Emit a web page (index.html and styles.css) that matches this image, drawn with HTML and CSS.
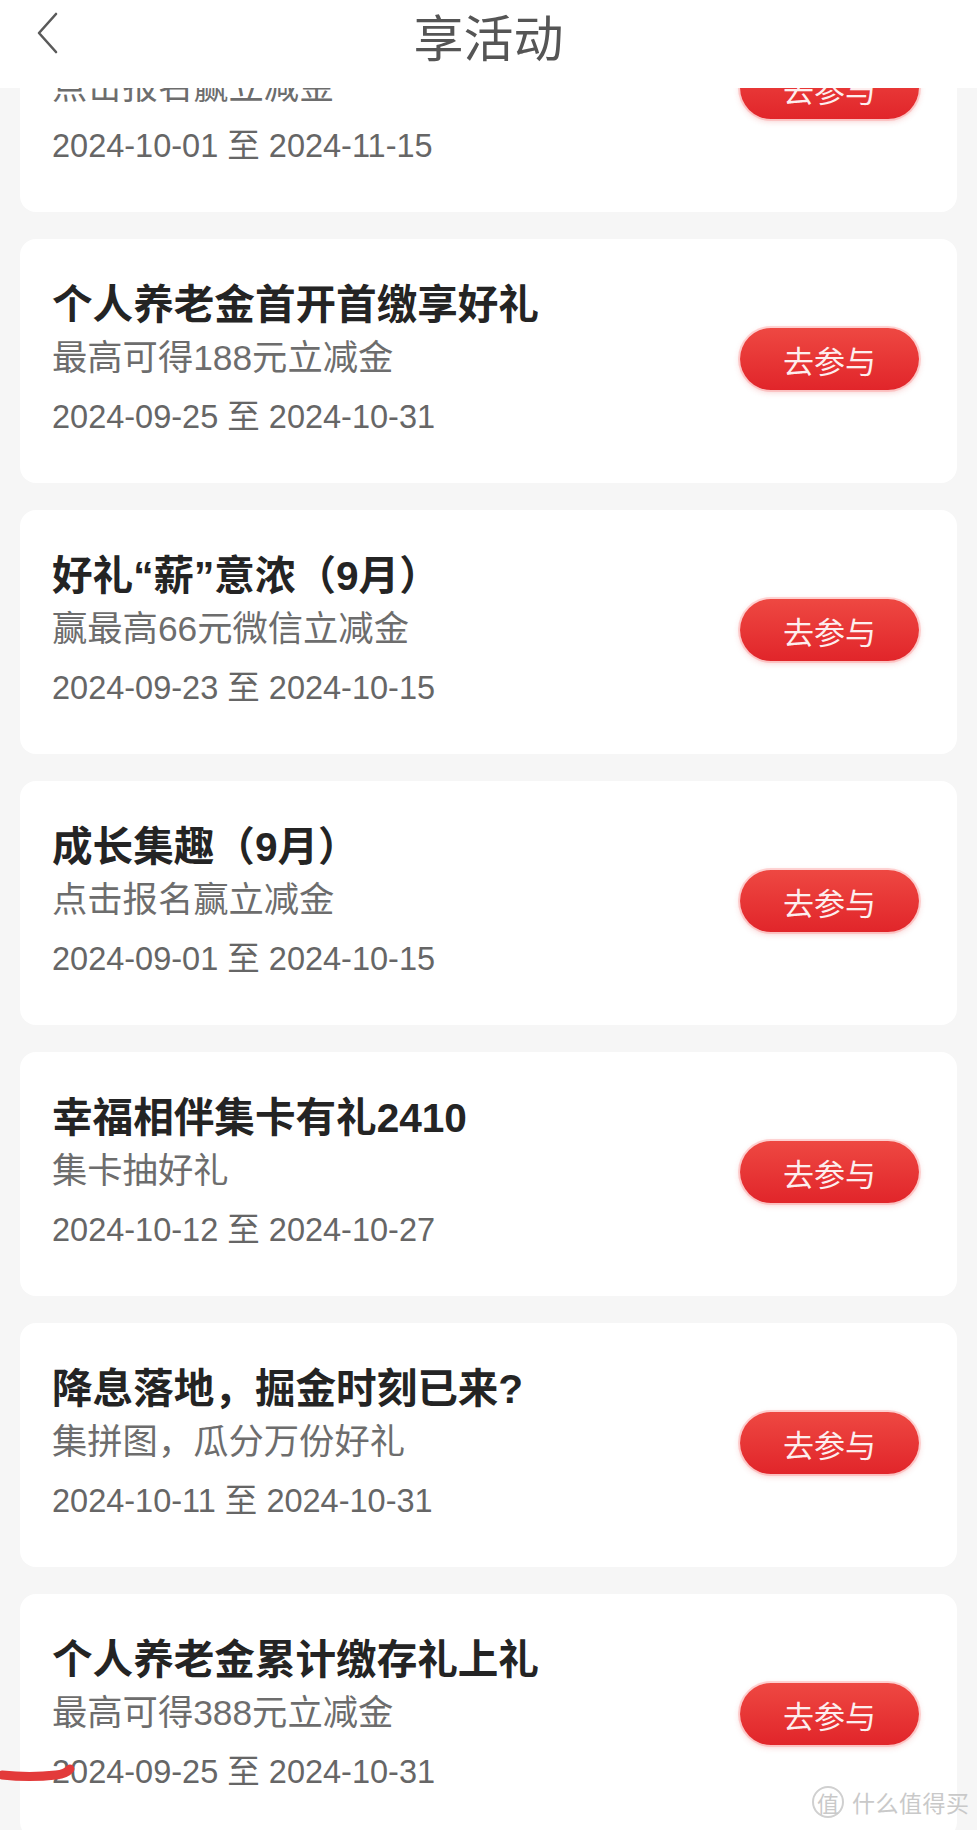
FILE: index.html
```html
<!DOCTYPE html>
<html lang="zh-CN">
<head>
    <meta charset="UTF-8">
    <meta name="viewport" content="width=device-width, initial-scale=1.0">
    <title>享活动</title>
    <link rel="stylesheet" href="styles.css">
</head>
<body>

<div class="app">
    <header class="nav-bar">
        <button class="nav-back" aria-label="返回">
            <svg width="22" height="42" viewBox="0 0 22 42">
                <path d="M20 2 L3 21 L20 40" fill="none" stroke="#5a5a5a" stroke-width="2.6" stroke-linecap="round" stroke-linejoin="round"/>
            </svg>
        </button>
        <h1 class="nav-title">享活动</h1>
        <span></span>
    </header>

    <main class="feed">
        <ul class="activity-list">
            <li class="activity-card">
                <div class="activity-info">
                    <div class="activity-title">成长集趣（10月）</div>
                    <div class="activity-desc">点击报名赢立减金</div>
                    <div class="activity-date">2024-10-01 至 2024-11-15</div>
                </div>
                <button class="join-btn">去参与</button>
            </li>
            <li class="activity-card">
                <div class="activity-info">
                    <div class="activity-title">个人养老金首开首缴享好礼</div>
                    <div class="activity-desc">最高可得188元立减金</div>
                    <div class="activity-date">2024-09-25 至 2024-10-31</div>
                </div>
                <button class="join-btn">去参与</button>
            </li>
            <li class="activity-card">
                <div class="activity-info">
                    <div class="activity-title">好礼“薪”意浓（9月）</div>
                    <div class="activity-desc">赢最高66元微信立减金</div>
                    <div class="activity-date">2024-09-23 至 2024-10-15</div>
                </div>
                <button class="join-btn">去参与</button>
            </li>
            <li class="activity-card">
                <div class="activity-info">
                    <div class="activity-title">成长集趣（9月）</div>
                    <div class="activity-desc">点击报名赢立减金</div>
                    <div class="activity-date">2024-09-01 至 2024-10-15</div>
                </div>
                <button class="join-btn">去参与</button>
            </li>
            <li class="activity-card">
                <div class="activity-info">
                    <div class="activity-title">幸福相伴集卡有礼2410</div>
                    <div class="activity-desc">集卡抽好礼</div>
                    <div class="activity-date">2024-10-12 至 2024-10-27</div>
                </div>
                <button class="join-btn">去参与</button>
            </li>
            <li class="activity-card">
                <div class="activity-info">
                    <div class="activity-title">降息落地，掘金时刻已来?</div>
                    <div class="activity-desc">集拼图，瓜分万份好礼</div>
                    <div class="activity-date">2024-10-11 至 2024-10-31</div>
                </div>
                <button class="join-btn">去参与</button>
            </li>
            <li class="activity-card">
                <div class="activity-info">
                    <div class="activity-title">个人养老金累计缴存礼上礼</div>
                    <div class="activity-desc">最高可得388元立减金</div>
                    <div class="activity-date">2024-09-25 至 2024-10-31</div>
                </div>
                <button class="join-btn">去参与</button>
            </li>
        </ul>
    </main>

    <!-- red pen mark drawn over the screenshot -->
    <svg class="pen-mark" width="80" height="24" viewBox="0 0 80 24">
        <path d="M2 13 Q30 16 56 13 Q66 12 70 7" fill="none" stroke="#e33a3a" stroke-width="9" stroke-linecap="round"/>
    </svg>

    <div class="watermark">
        <span class="watermark-logo">值</span>
        <span class="watermark-text">什么值得买</span>
    </div>
</div>

</body>
</html>
```

FILE: styles.css
```css
html, body {
    margin: 0;
    height: 100%;
    overflow: hidden;
}

body {
    font-family: "Liberation Sans", "Noto Sans CJK SC", sans-serif;
    background-color: #f6f6f6;
}

.app {
    position: relative;
    height: 1830px;
    display: flex;
    flex-direction: column;
}

.nav-bar {
    height: 88px;
    box-sizing: border-box;
    padding-bottom: 18px;
    display: grid;
    grid-template-columns: 1fr auto 1fr;
    align-items: center;
    background-color: #fff;
    z-index: 2;
}

.nav-back {
    justify-self: start;
    margin-left: 36px;
    margin-top: -4px;
    padding: 0;
    border: none;
    background: none;
    display: flex;
}

.nav-title {
    margin: 0;
    font-size: 50px;
    font-weight: 400;
    line-height: 70px;
    color: #555;
    font-family: "Noto Sans CJK SC", sans-serif;
}

.feed {
    flex: 1;
    overflow: hidden;
}

.activity-list {
    list-style: none;
    margin: -120px 0 0;
    padding: 0 20px;
    display: flex;
    flex-direction: column;
    gap: 27px;
}

.activity-card {
    background-color: #fff;
    border-radius: 16px;
    padding: 40px 38px 44px 32px;
    display: flex;
    align-items: center;
    justify-content: space-between;
}

.activity-title {
    font-size: 40.6px;
    line-height: 52px;
    font-weight: 700;
    color: #242424;
}

.activity-desc {
    margin-top: 2px;
    font-size: 35.3px;
    line-height: 50px;
    color: #6d6d6d;
}

.activity-date {
    margin-top: 12px;
    font-size: 32.5px;
    line-height: 44px;
    color: #666;
}

.join-btn {
    width: 179px;
    height: 62px;
    border: none;
    border-radius: 31px;
    font-family: "Noto Sans CJK SC", sans-serif;
    font-size: 31px;
    color: #fdeeee;
    background: linear-gradient(#ee4842, #e1252a);
    box-shadow: 0 0 0 2px rgba(255, 140, 140, 0.35), 0 2px 6px rgba(225, 40, 40, 0.25);
    cursor: pointer;
}

.pen-mark {
    position: absolute;
    left: 0;
    top: 1762px;
}

.watermark {
    position: absolute;
    left: 812px;
    top: 1785px;
    display: flex;
    align-items: center;
    gap: 8px;
    color: #c9c9c9;
    font-family: "Noto Sans CJK SC", sans-serif;
}

.watermark-logo {
    width: 28px;
    height: 28px;
    border: 2px solid #d0d0d0;
    border-radius: 50%;
    font-size: 22px;
    line-height: 28px;
    text-align: center;
}

.watermark-text {
    font-size: 23px;
    letter-spacing: 0.5px;
}
```
